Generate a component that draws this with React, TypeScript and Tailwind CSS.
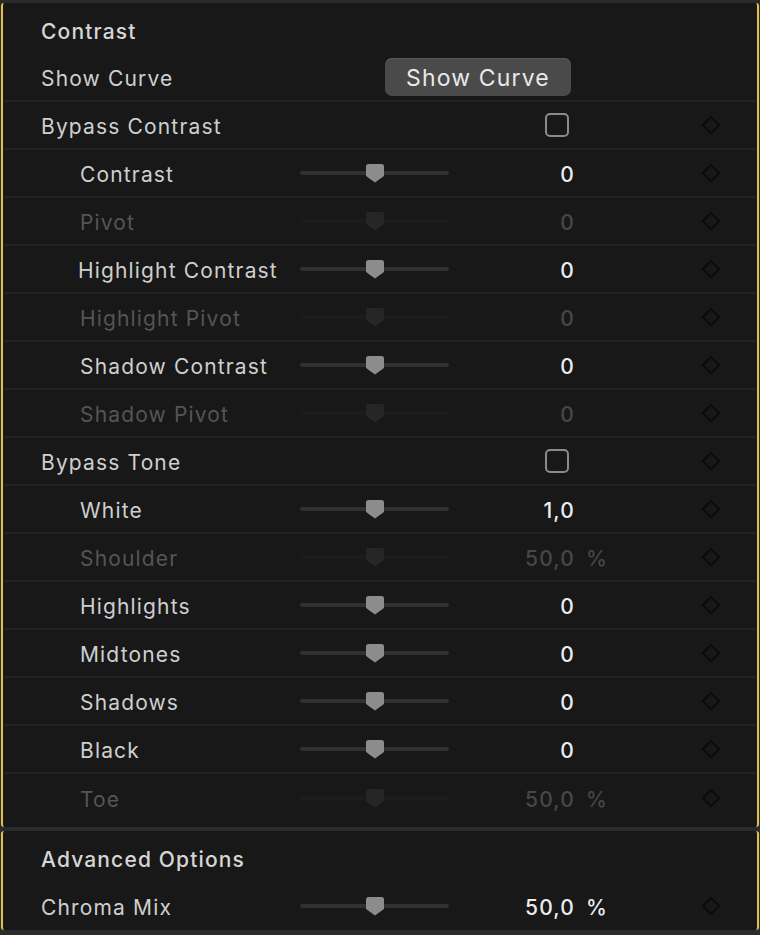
import React from 'react';

type Row = {
  label: string;
  indent?: boolean;
  kind: 'slider' | 'checkbox';
  value?: string;
  unit?: string;
  disabled?: boolean;
  last?: boolean;
};

const contrastRows: Row[] = [
  { label: 'Bypass Contrast', kind: 'checkbox' },
  { label: 'Contrast', indent: true, kind: 'slider', value: '0' },
  { label: 'Pivot', indent: true, kind: 'slider', value: '0', disabled: true },
  { label: 'Highlight Contrast', indent: true, kind: 'slider', value: '0' },
  { label: 'Highlight Pivot', indent: true, kind: 'slider', value: '0', disabled: true },
  { label: 'Shadow Contrast', indent: true, kind: 'slider', value: '0' },
  { label: 'Shadow Pivot', indent: true, kind: 'slider', value: '0', disabled: true },
  { label: 'Bypass Tone', kind: 'checkbox' },
  { label: 'White', indent: true, kind: 'slider', value: '1,0' },
  { label: 'Shoulder', indent: true, kind: 'slider', value: '50,0', unit: '%', disabled: true },
  { label: 'Highlights', indent: true, kind: 'slider', value: '0' },
  { label: 'Midtones', indent: true, kind: 'slider', value: '0' },
  { label: 'Shadows', indent: true, kind: 'slider', value: '0' },
  { label: 'Black', indent: true, kind: 'slider', value: '0' },
  { label: 'Toe', indent: true, kind: 'slider', value: '50,0', unit: '%', disabled: true, last: true },
];

function Diamond() {
  return (
    <div className="w-5 flex justify-center">
      <svg width="22" height="22" viewBox="0 0 22 22">
        <path d="M11 2 L20 11 L11 20 L2 11 Z" fill="none" stroke="#0b0b0b" strokeWidth="2" />
      </svg>
    </div>
  );
}

function Slider({ disabled }: { disabled?: boolean }) {
  return (
    <div className="relative w-[149px] h-5 flex items-center">
      <div className={`w-full h-[4px] rounded-full ${disabled ? 'bg-[#1c1c1c]' : 'bg-[#303030]'}`} />
      <svg
        className="absolute left-[66px] top-[1px]"
        width="18"
        height="19"
        viewBox="0 0 18 19"
      >
        <path
          d="M0 2.5 Q0 0 2.5 0 H15.5 Q18 0 18 2.5 V12 L9 18.5 L0 12 Z"
          fill={disabled ? '#262626' : '#8c8c8c'}
        />
      </svg>
    </div>
  );
}

function Checkbox() {
  return <div className="w-6 h-6 rounded-[5px] border-2 border-[#8a8a8a]" />;
}

function ParamRow({ row }: { row: Row }) {
  const labelColor = row.disabled ? 'text-[#555555]' : 'text-[#cfcfcf]';
  const valueColor = row.disabled ? 'text-[#474747]' : 'text-[#ececec]';
  return (
    <div
      className={`flex items-center h-12 pl-[38px] ${row.last ? '' : 'border-b-2 border-[#222222]'}`}
    >
      {row.kind === 'checkbox' ? (
        <>
          <div className="w-[504px] pt-[4px] text-[#cfcfcf]">{row.label}</div>
          <Checkbox />
          <div className="w-[132px]" />
          <Diamond />
        </>
      ) : (
        <>
          <div className={`w-[259px] pt-[4px] ${row.indent ? 'pl-[39px]' : ''} ${labelColor}`}>
            {row.label === 'Highlight Contrast' ? <span className="-ml-[2px]">{row.label}</span> : row.label}
          </div>
          <Slider disabled={row.disabled} />
          <div className={`w-[126px] pt-[4px] text-right font-medium ${valueColor}`}>{row.value}</div>
          <div className={`w-[126px] pt-[4px] pl-[11px] font-medium ${valueColor}`}>{row.unit}</div>
          <Diamond />
        </>
      )}
    </div>
  );
}

export default function App() {
  return (
    <div
      className="w-[760px] h-[935px] bg-[#2b2b2b] pt-[3px] text-[21px] tracking-[0.055em] overflow-hidden"
      style={{ fontFamily: 'Inter, "Noto Sans", sans-serif' }}
    >
      <div className="mx-px h-[824px] bg-[#181818] border-x-2 border-[#e2c14b] rounded-[3px] pt-[3px]">
        <div className="flex items-center h-12 pl-[38px] pt-[3px] font-medium text-[#d6d6d6]">Contrast</div>
        <div className="flex items-center h-12 pl-[38px] border-b-2 border-[#222222]">
          <div className="w-[344px] pt-[4px] text-[#cfcfcf]">Show Curve</div>
          <button className="w-[186px] h-[38px] pt-[2px] rounded-[7px] bg-[#4a4a4a] text-[#e8e8e8] text-[23px] tracking-[0.05em] shadow-[inset_0_1px_0_#585858]">
            Show Curve
          </button>
        </div>
        {contrastRows.map((row) => (
          <ParamRow key={row.label} row={row} />
        ))}
      </div>

      <div className="mx-px mt-[4px] h-[99px] bg-[#181818] border-x-2 border-[#e2c14b] rounded-[3px] pt-[3px]">
        <div className="flex items-center h-12 pl-[38px] pt-[3px] font-medium text-[#d6d6d6]">Advanced Options</div>
        <ParamRow row={{ label: 'Chroma Mix', kind: 'slider', value: '50,0', unit: '%', last: true }} />
      </div>
    </div>
  );
}
